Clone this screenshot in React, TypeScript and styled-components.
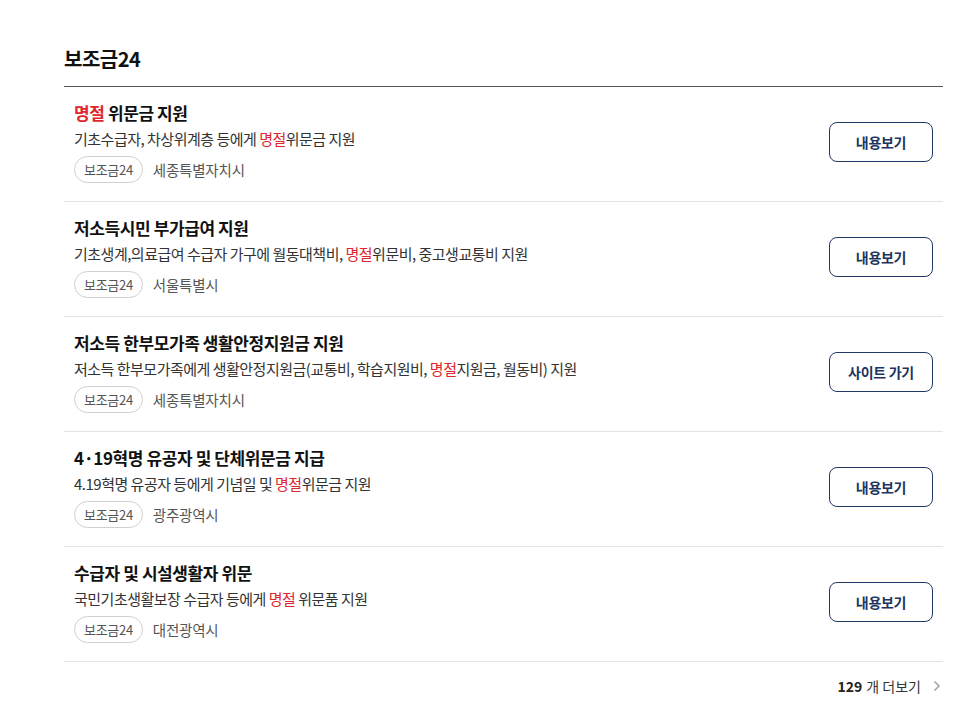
import * as React from 'react';
import styled, { createGlobalStyle } from 'styled-components';

const GlobalStyle = createGlobalStyle`
  body {
    margin: 0;
    background: #fff;
    font-family: "Noto Sans CJK KR", "Noto Sans", sans-serif;
    color: #222;
  }
`

const Section = styled.section`
  width: 879px;
  margin-left: 64px;
  padding-top: 45px;
`
const Heading = styled.h2`
  margin: 0;
  font-size: 20px;
  line-height: 28px;
  font-weight: 700;
  color: #111;
  letter-spacing: -0.5px;
  padding-bottom: 13px;
  border-bottom: 1px solid #555;
`
const List = styled.ul`
  list-style: none;
  margin: 0;
  padding: 0;
`
const Item = styled.li`
  display: flex;
  align-items: center;
  justify-content: space-between;
  padding: 14.5px 10px 18.5px;
  border-bottom: 1px solid #e2e2e2;
`
const Info = styled.div`
  display: flex;
  flex-direction: column;
`
const Title = styled.strong`
  font-size: 17px;
  line-height: 22px;
  font-weight: 700;
  color: #111;
  letter-spacing: -0.4px;
`
const Desc = styled.p`
  margin: 4px 0 0;
  font-size: 15px;
  line-height: 22px;
  color: #333;
  letter-spacing: -0.5px;
`
const Mark = styled.span`
  color: #e0262d;
`
const Meta = styled.div`
  display: flex;
  align-items: center;
  gap: 10px;
  margin-top: 6px;
`
const Tag = styled.span`
  display: inline-flex;
  align-items: center;
  height: 27px;
  box-sizing: border-box;
  padding: 0 9px;
  border: 1px solid #cfcfcf;
  border-radius: 14px;
  font-size: 13px;
  color: #555;
  letter-spacing: -0.3px;
`
const Region = styled.span`
  font-size: 14.5px;
  color: #555;
  letter-spacing: -0.2px;
`
const ViewButton = styled.button`
  width: 104px;
  height: 40px;
  box-sizing: border-box;
  border: 1.5px solid #1f3964;
  border-radius: 8px;
  background: #fff;
  font-family: inherit;
  font-size: 14px;
  font-weight: 700;
  color: #1c3460;
  letter-spacing: -0.3px;
  cursor: pointer;
`
const Footer = styled.div`
  display: flex;
  justify-content: flex-end;
  align-items: center;
  padding-top: 13px;
  font-size: 14px;
  line-height: 22px;
  color: #333;
`
const More = styled.a`
  display: inline-flex;
  align-items: center;
  gap: 4px;
  color: #333;
  text-decoration: none;
  cursor: pointer;
  b {
    font-weight: 700;
    color: #222;
  }
`
const Chevron = styled.svg`
  margin-left: 8px;
  margin-right: 2px;
`

type Part = string | { mark: string }

interface Service {
  title: Part[]
  desc: Part[]
  region: string
  action: string
}

const services: Service[] = [
  {
    title: [{ mark: '명절' }, ' 위문금 지원'],
    desc: ['기초수급자, 차상위계층 등에게 ', { mark: '명절' }, '위문금 지원'],
    region: '세종특별자치시',
    action: '내용보기',
  },
  {
    title: ['저소득시민 부가급여 지원'],
    desc: ['기초생계,의료급여 수급자 가구에 월동대책비, ', { mark: '명절' }, '위문비, 중고생교통비 지원'],
    region: '서울특별시',
    action: '내용보기',
  },
  {
    title: ['저소득 한부모가족 생활안정지원금 지원'],
    desc: ['저소득 한부모가족에게 생활안정지원금(교통비, 학습지원비, ', { mark: '명절' }, '지원금, 월동비) 지원'],
    region: '세종특별자치시',
    action: '사이트 가기',
  },
  {
    title: ['4·19혁명 유공자 및 단체위문금 지급'],
    desc: ['4.19혁명 유공자 등에게 기념일 및 ', { mark: '명절' }, '위문금 지원'],
    region: '광주광역시',
    action: '내용보기',
  },
  {
    title: ['수급자 및 시설생활자 위문'],
    desc: ['국민기초생활보장 수급자 등에게 ', { mark: '명절' }, ' 위문품 지원'],
    region: '대전광역시',
    action: '내용보기',
  },
]

const renderParts = (parts: Part[]) =>
  parts.map((p, i) => (typeof p === 'string' ? <React.Fragment key={i}>{p}</React.Fragment> : <Mark key={i}>{p.mark}</Mark>))

export default function App() {
  return (
    <>
      <GlobalStyle />
      <Section>
        <Heading>보조금24</Heading>
        <List>
          {services.map((s, i) => (
            <Item key={i}>
              <Info>
                <Title>{renderParts(s.title)}</Title>
                <Desc>{renderParts(s.desc)}</Desc>
                <Meta>
                  <Tag>보조금24</Tag>
                  <Region>{s.region}</Region>
                </Meta>
              </Info>
              <ViewButton>{s.action}</ViewButton>
            </Item>
          ))}
        </List>
        <Footer>
          <More>
            <b>129</b> 개 더보기
            <Chevron width="8" height="12" viewBox="0 0 8 12">
              <path d="M1.5 1.5 L6 6 L1.5 10.5" fill="none" stroke="#999" strokeWidth="1.4" />
            </Chevron>
          </More>
        </Footer>
      </Section>
    </>
  )
}
